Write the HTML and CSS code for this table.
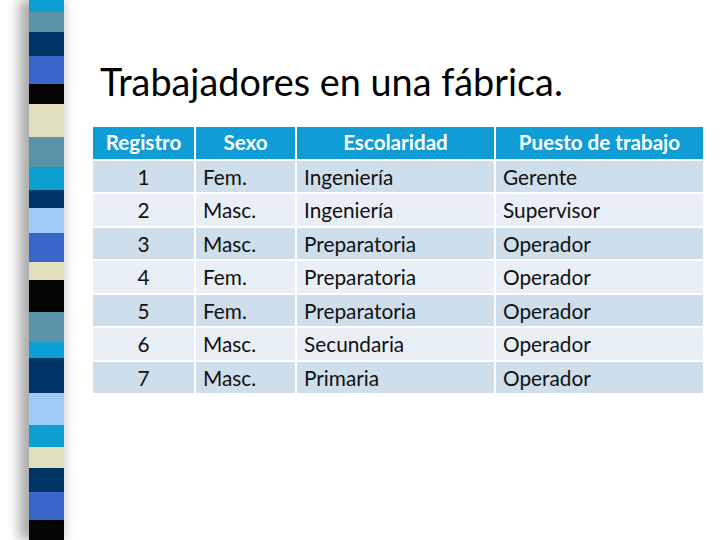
FILE: index.html
```html
<!DOCTYPE html>
<html lang="es">
<head>
<meta charset="utf-8">
<title>Trabajadores en una fábrica.</title>
<link rel="stylesheet" href="styles.css">
</head>
<body>
<div class="slide">
  <div class="strip">
    <span class="b cyan" style="height:12px"></span>
    <span class="b steel" style="height:20px"></span>
    <span class="b navy" style="height:24px"></span>
    <span class="b royal" style="height:28px"></span>
    <span class="b black" style="height:20px"></span>
    <span class="b cream" style="height:33px"></span>
    <span class="b steel" style="height:30px"></span>
    <span class="b cyan" style="height:23px"></span>
    <span class="b navy" style="height:18px"></span>
    <span class="b light" style="height:25px"></span>
    <span class="b royal" style="height:29px"></span>
    <span class="b cream" style="height:18px"></span>
    <span class="b black" style="height:32px"></span>
    <span class="b steel" style="height:30px"></span>
    <span class="b cyan" style="height:16px"></span>
    <span class="b navy" style="height:35px"></span>
    <span class="b light" style="height:32px"></span>
    <span class="b cyan" style="height:22px"></span>
    <span class="b cream" style="height:21px"></span>
    <span class="b navy" style="height:24px"></span>
    <span class="b royal" style="height:28px"></span>
    <span class="b black" style="height:20px"></span>
  </div>
  <div class="content">
    <h1 class="title">Trabajadores en una fábrica.</h1>
    <div class="table">
      <div class="th">Registro</div><div class="th">Sexo</div><div class="th">Escolaridad</div><div class="th">Puesto de trabajo</div>
      <div class="td odd num">1</div><div class="td odd">Fem.</div><div class="td odd">Ingeniería</div><div class="td odd">Gerente</div>
      <div class="td even num">2</div><div class="td even">Masc.</div><div class="td even">Ingeniería</div><div class="td even">Supervisor</div>
      <div class="td odd num">3</div><div class="td odd">Masc.</div><div class="td odd">Preparatoria</div><div class="td odd">Operador</div>
      <div class="td even num">4</div><div class="td even">Fem.</div><div class="td even">Preparatoria</div><div class="td even">Operador</div>
      <div class="td odd num">5</div><div class="td odd">Fem.</div><div class="td odd">Preparatoria</div><div class="td odd">Operador</div>
      <div class="td even num">6</div><div class="td even">Masc.</div><div class="td even">Secundaria</div><div class="td even">Operador</div>
      <div class="td odd num">7</div><div class="td odd">Masc.</div><div class="td odd">Primaria</div><div class="td odd">Operador</div>
    </div>
  </div>
</div>
</body>
</html>
```

FILE: styles.css
```css
html, body {
  margin: 0;
  padding: 0;
  background: #ffffff;
}
.slide {
  width: 720px;
  height: 540px;
  display: flex;
  overflow: hidden;
  font-family: Lato, "Open Sans", sans-serif;
}
.strip {
  margin-left: 29px;
  width: 35px;
  height: 540px;
  display: flex;
  flex-direction: column;
  flex: none;
  box-shadow: -10px 0 12px rgba(0, 0, 0, 0.32), 4px 0 7px rgba(0, 0, 0, 0.12);
}
.b { display: block; flex: none; }
.cyan { background: #0b9fd2; }
.steel { background: #5a92aa; }
.navy { background: #013466; }
.royal { background: #3a66c9; }
.black { background: #050505; }
.cream { background: #e0e0bc; }
.light { background: #9fcbf7; }
.content {
  margin-left: 29px;
  display: flex;
  flex-direction: column;
}
.title {
  margin: 58px 0 0 7px;
  font-weight: 400;
  font-size: 37.8px;
  line-height: 48px;
  color: #000;
  height: 48px;
}
.table {
  margin-top: 21px;
  display: grid;
  grid-template-columns: 101px 99px 197px 207px;
  grid-auto-rows: 31.5px;
  gap: 2px;
}
.th {
  background: #109dd6;
  color: #fff;
  font-weight: 700;
  font-size: 20.6px;
  text-align: center;
  line-height: 31.5px;
}
.td {
  font-size: 20.8px;
  color: #111;
  line-height: 31.5px;
  padding-left: 7px;
}
.td.num {
  padding-left: 0;
  text-align: center;
}
.odd { background: #cfdeeb; }
.even { background: #e8eff7; }
```
